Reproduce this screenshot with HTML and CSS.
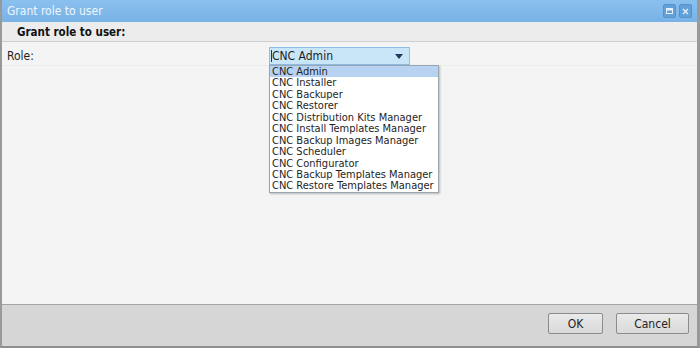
FILE: index.html
```html
<!DOCTYPE html>
<html lang="en">
<head>
    <meta charset="utf-8">
    <title>Grant role to user</title>
    <link rel="stylesheet" href="styles.css">
</head>
<body>
    <div id="dialog">
        <div class="titlebar">
            <span class="title">Grant role to user</span>
            <div class="tools">
                <span class="tool"><svg width="7" height="6" viewBox="0 0 7 6"><rect x="0.5" y="0.5" width="6" height="5" fill="none" stroke="#e6f1fb"/><rect x="0.5" y="0.5" width="6" height="2" fill="#e6f1fb"/></svg></span>
                <span class="tool"><svg width="7" height="7" viewBox="0 0 7 7"><path d="M1 1L6 6M6 1L1 6" stroke="#e6f1fb" stroke-width="1.3"/></svg></span>
            </div>
        </div>
        <div class="header">Grant role to user:</div>
        <div class="body">
            <div class="row">
                <label class="label">Role:</label>
                <div class="combo">
                    <div class="combo-field"><span class="caret"></span>CNC Admin<span class="arrow"></span></div>
                    <ul class="combo-list">
                        <li class="selected">CNC Admin</li>
                        <li>CNC Installer</li>
                        <li>CNC Backuper</li>
                        <li>CNC Restorer</li>
                        <li>CNC Distribution Kits Manager</li>
                        <li>CNC Install Templates Manager</li>
                        <li>CNC Backup Images Manager</li>
                        <li>CNC Scheduler</li>
                        <li>CNC Configurator</li>
                        <li>CNC Backup Templates Manager</li>
                        <li>CNC Restore Templates Manager</li>
                    </ul>
                </div>
            </div>
        </div>
        <div class="footer">
            <button class="btn btn-ok">OK</button>
            <button class="btn btn-cancel">Cancel</button>
        </div>
    </div>
</body>
</html>
```
FILE: styles.css
```css
html,body{
    margin: 0;
    background-color: #9c9c9c;
}

#dialog{
    width: 700px;
    height: 348px;
    box-sizing: border-box;
    border-left: 2px solid #999;
    border-right: 3px solid #999;
    border-bottom: 2px solid #8f8f8f;
    display: flex;
    flex-direction: column;
    background-color: #f4f4f4;
    font-family: "DejaVu Sans Condensed", "DejaVu Sans", sans-serif;
    font-size: 11px;
    color: #1e1e1e;
}

#dialog .titlebar{
    height: 22px;
    flex: none;
    display: flex;
    align-items: center;
    justify-content: space-between;
    padding: 0 5px 0 5px;
    background: linear-gradient(#8ac0ee, #78b2e6);
    color: #eef6ff;
    font-size: 12px;
}
#dialog .tools{
    display: flex;
    gap: 3px;
}
#dialog .tool{
    width: 11px;
    height: 12px;
    display: flex;
    align-items: center;
    justify-content: center;
    background-color: #62a0da;
    border: 1px solid #5592cc;
    border-radius: 2px;
}

#dialog .header{
    height: 17px;
    flex: none;
    padding: 2px 0 0 15px;
    line-height: 17px;
    font-weight: bold;
    font-size: 11.5px;
    background-color: #ececec;
    border-bottom: 1px solid #cfcfcf;
    color: #111;
}

#dialog .body{
    flex: 1;
    padding-top: 5px;
}
#dialog .row{
    display: flex;
    align-items: flex-start;
    height: 18px;
    border-bottom: 1px dotted #dfe8dc;
}
#dialog .label{
    width: 262px;
    padding-left: 5px;
    line-height: 19px;
    font-size: 12px;
}

#dialog .combo{
    position: relative;
}
#dialog .combo-field{
    width: 138px;
    height: 16px;
    line-height: 16px;
    border: 1px solid #8fbde6;
    background-color: #c9e5f8;
    font-size: 12px;
    padding-left: 1px;
    position: relative;
}
#dialog .caret{
    display: inline-block;
    width: 1px;
    height: 12px;
    background-color: #333;
    vertical-align: -2px;
}
#dialog .arrow{
    position: absolute;
    right: 6px;
    top: 6px;
    border-left: 4px solid transparent;
    border-right: 4px solid transparent;
    border-top: 5px solid #1d3b5e;
}
#dialog .combo-list{
    position: absolute;
    top: 18px;
    left: 0;
    width: 168px;
    margin: 0;
    padding: 0;
    list-style: none;
    background-color: #fff;
    border: 1px solid #9aa5b0;
    box-shadow: 1px 1px 2px rgba(0,0,0,0.25);
}
#dialog .combo-list li{
    height: 11.45px;
    line-height: 11.45px;
    padding-left: 2px;
    white-space: nowrap;
}
#dialog .combo-list li.selected{
    background-color: #b8d3f2;
}

#dialog .footer{
    height: 42px;
    flex: none;
    border-top: 1px solid #a4a4a4;
    background-color: #d6d6d6;
    display: flex;
    justify-content: flex-end;
    align-items: flex-start;
    gap: 13px;
    padding: 8px 8px 0 0;
    box-sizing: border-box;
}
#dialog .btn{
    height: 21px;
    border: 1px solid #8c8c8c;
    border-radius: 2px;
    background: linear-gradient(#eaeaea, #d9d9d9);
    font-family: "DejaVu Sans Condensed", "DejaVu Sans", sans-serif;
    font-size: 12px;
    color: #222;
    padding: 0;
}
#dialog .btn-ok{
    width: 55px;
}
#dialog .btn-cancel{
    width: 73px;
}
```
